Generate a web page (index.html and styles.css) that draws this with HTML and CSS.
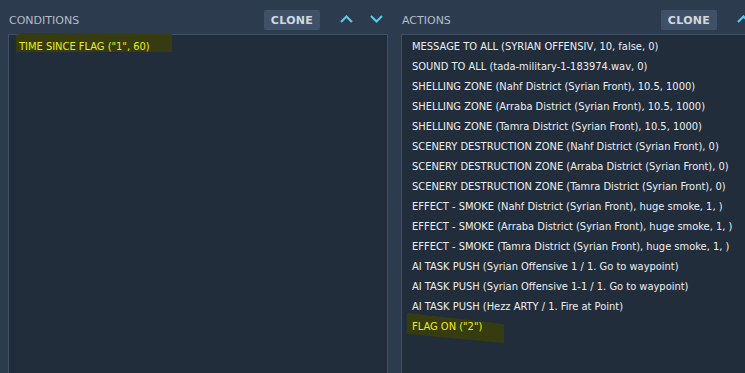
FILE: index.html
```html
<!DOCTYPE html>
<html>
<head>
<meta charset="utf-8">
<link rel="stylesheet" href="styles.css">
</head>
<body>
<div class="editor">
  <section class="pane pane-left">
    <header class="pane-head">
      <span class="pane-title">CONDITIONS</span>
      <button class="clone">CLONE</button>
      <span class="chev chev-first"><svg width="13" height="8" viewBox="0 0 13 8"><path d="M1 7 L6.5 1.5 L12 7" fill="none" stroke="#5cc6e6" stroke-width="2.2"/></svg></span>
      <span class="chev"><svg width="13" height="8" viewBox="0 0 13 8"><path d="M1 1 L6.5 6.5 L12 1" fill="none" stroke="#5cc6e6" stroke-width="2.2"/></svg></span>
    </header>
    <ul class="list">
      <li class="row marked mark-cond">TIME SINCE FLAG ("1", 60)</li>
    </ul>
  </section>
  <section class="pane pane-right">
    <header class="pane-head">
      <span class="pane-title">ACTIONS</span>
      <button class="clone">CLONE</button>
      <span class="chev chev-first"><svg width="13" height="8" viewBox="0 0 13 8"><path d="M1 7 L6.5 1.5 L12 7" fill="none" stroke="#5cc6e6" stroke-width="2.2"/></svg></span>
      <span class="chev"><svg width="13" height="8" viewBox="0 0 13 8"><path d="M1 1 L6.5 6.5 L12 1" fill="none" stroke="#5cc6e6" stroke-width="2.2"/></svg></span>
    </header>
    <ul class="list list-actions">
      <li class="row">MESSAGE TO ALL (SYRIAN OFFENSIV, 10, false, 0)</li>
      <li class="row">SOUND TO ALL (tada-military-1-183974.wav, 0)</li>
      <li class="row">SHELLING ZONE (Nahf District (Syrian Front), 10.5, 1000)</li>
      <li class="row">SHELLING ZONE (Arraba District (Syrian Front), 10.5, 1000)</li>
      <li class="row">SHELLING ZONE (Tamra District (Syrian Front), 10.5, 1000)</li>
      <li class="row">SCENERY DESTRUCTION ZONE (Nahf District (Syrian Front), 0)</li>
      <li class="row">SCENERY DESTRUCTION ZONE (Arraba District (Syrian Front), 0)</li>
      <li class="row">SCENERY DESTRUCTION ZONE (Tamra District (Syrian Front), 0)</li>
      <li class="row">EFFECT - SMOKE (Nahf District (Syrian Front), huge smoke, 1, )</li>
      <li class="row">EFFECT - SMOKE (Arraba District (Syrian Front), huge smoke, 1, )</li>
      <li class="row">EFFECT - SMOKE (Tamra District (Syrian Front), huge smoke, 1, )</li>
      <li class="row">AI TASK PUSH (Syrian Offensive 1 / 1. Go to waypoint)</li>
      <li class="row">AI TASK PUSH (Syrian Offensive 1-1 / 1. Go to waypoint)</li>
      <li class="row">AI TASK PUSH (Hezz ARTY / 1. Fire at Point)</li>
      <li class="row marked mark-flag">FLAG ON ("2")</li>
    </ul>
  </section>
</div>
</body>
</html>
```
FILE: styles.css
```css
html, body {
  margin: 0;
  padding: 0;
  height: 100%;
  overflow: hidden;
  background: #2c3b4e;
}
body {
  font-family: "DejaVu Sans Condensed", "DejaVu Sans", sans-serif;
  font-stretch: semi-condensed;
  font-size: 11px;
}
.editor {
  display: grid;
  grid-template-columns: 380px 384px;
  column-gap: 13px;
  padding-left: 8px;
  height: 100%;
}
.pane {
  display: flex;
  flex-direction: column;
  min-height: 0;
}
.pane-head {
  height: 34px;
  display: flex;
  align-items: center;
  flex: none;
}
.pane-title {
  font-family: "DejaVu Sans", sans-serif;
  font-stretch: normal;
  color: #b4bcc7;
  font-size: 11px;
  padding-left: 1px;
  flex: 1;
  padding-top: 7px;
}
.clone {
  width: 56px;
  height: 20px;
  margin-top: 6px;
  border: none;
  border-radius: 2px;
  background: #3f5169;
  color: #d3d8de;
  font-family: "DejaVu Sans", sans-serif;
  font-weight: bold;
  font-size: 11px;
  padding: 0;
  letter-spacing: 0.3px;
}
.chev {
  width: 24px;
  display: flex;
  justify-content: center;
  padding-top: 4px;
  margin-left: 6px;
}
.chev-first { margin-left: 14px; }
.list {
  list-style: none;
  margin: 0;
  padding: 2px 0 0 0;
  flex: 1;
  background: #222d3c;
  border: 1px solid #3e4f66;
  border-bottom: none;
}
.row {
  height: 20px;
  line-height: 20px;
  color: #eceef0;
  white-space: nowrap;
  padding-left: 10px;
  position: relative;
}
.marked {
  color: #ecec10;
  isolation: isolate;
}
.marked::before {
  content: "";
  position: absolute;
  background: #373c10;
  z-index: -1;
}
.mark-cond::before {
  left: 7px;
  top: -4px;
  width: 156px;
  height: 19px;
  clip-path: polygon(0 2px, 8px 0, 100% 1px, 100% 100%, 0 100%);
}
.mark-flag::before {
  left: 5px;
  top: -4px;
  width: 97px;
  height: 30px;
  clip-path: polygon(0 0, 100% 11px, 100% 100%, 0 70%);
}
```
